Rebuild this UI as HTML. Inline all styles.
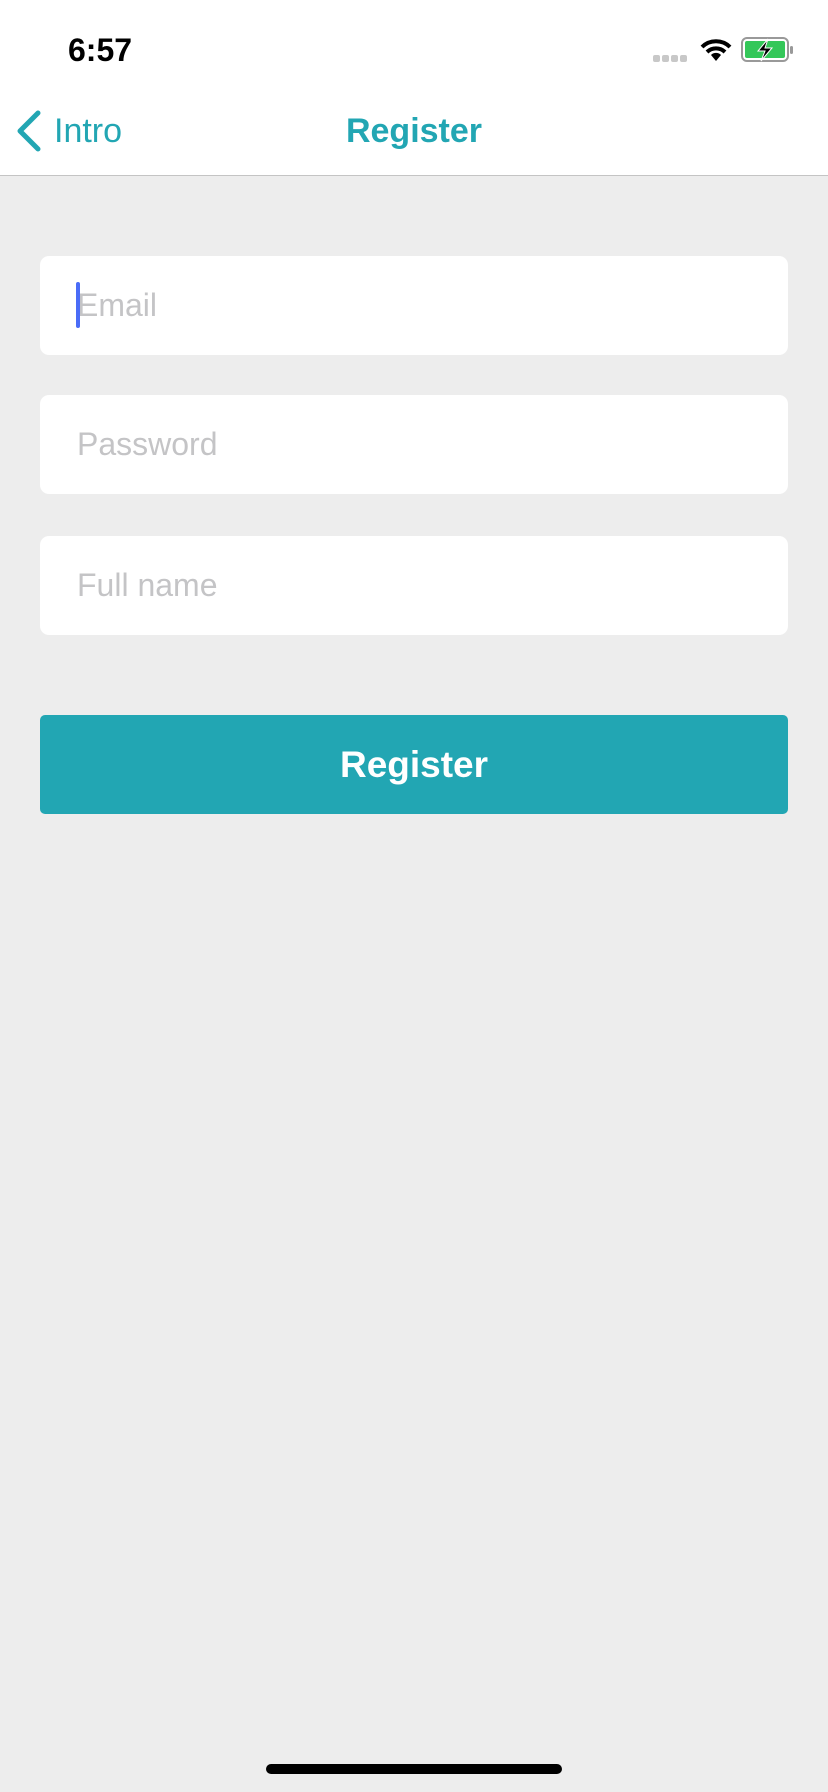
<!DOCTYPE html>
<html><head><meta charset="utf-8"><style>
*{margin:0;padding:0;box-sizing:border-box}
body{width:828px;height:1792px;background:#ededed;font-family:"Liberation Sans",sans-serif;position:relative;overflow:hidden}
.top{position:absolute;left:0;top:0;width:828px;height:176px;background:#fff;border-bottom:1.5px solid #c4c4c4}
.time{position:absolute;left:68px;top:32px;font-size:32px;font-weight:bold;color:#000}
.field{position:absolute;left:40px;width:748px;height:99px;background:#fff;border-radius:9px;font-size:32px;color:#c4c4c6;padding-left:37px;line-height:99px}
.btn{position:absolute;left:40px;top:715px;width:748px;height:99px;background:#22a6b3;border-radius:5px;color:#fff;font-size:37px;font-weight:bold;text-align:center;line-height:99px}
</style></head><body>
<div class="top">
<div class="time">6:57</div>
<div style="position:absolute;left:653px;top:55px;width:36px;height:7px">
<span style="position:absolute;left:0;width:7px;height:7px;border-radius:2px;background:#c8c8c8"></span>
<span style="position:absolute;left:9px;width:7px;height:7px;border-radius:2px;background:#c8c8c8"></span>
<span style="position:absolute;left:18px;width:7px;height:7px;border-radius:2px;background:#c8c8c8"></span>
<span style="position:absolute;left:27px;width:7px;height:7px;border-radius:2px;background:#c8c8c8"></span>
</div>
<svg style="position:absolute;left:700px;top:38px" width="32" height="24" viewBox="0 0 32 24"><path d="M2 9 A20 20 0 0 1 30 9" stroke="#000" stroke-width="4" fill="none"/><path d="M7 14 A13 13 0 0 1 25 14" stroke="#000" stroke-width="4" fill="none"/><path d="M16 23 L11 17 A7 7 0 0 1 21 17 Z" fill="#000"/></svg>
<svg style="position:absolute;left:741px;top:37px" width="56" height="26" viewBox="0 0 56 26"><rect x="1" y="1" width="46" height="23" rx="5" fill="none" stroke="#999" stroke-width="2"/><rect x="4" y="4" width="40" height="17" rx="2" fill="#34c759"/><rect x="49" y="9" width="3" height="8" rx="1.5" fill="#999"/><path d="M27 2 L17 14 L24 14 L20 24 L31 11 L24 11 Z" fill="#000" stroke="#fff" stroke-width="1"/></svg>
<svg style="position:absolute;left:14px;top:110px" width="28" height="42" viewBox="0 0 28 42"><path d="M24 3 L6 21 L24 39" stroke="#22a6b3" stroke-width="5" fill="none" stroke-linecap="round" stroke-linejoin="round"/></svg>
<div style="position:absolute;left:54px;top:112px;font-size:34px;color:#22a6b3">Intro</div>
<div style="position:absolute;left:0;width:828px;top:112px;text-align:center;font-size:34px;color:#22a6b3;font-weight:bold">Register</div>
</div>
<div class="field" style="top:256px"><span style="position:absolute;left:36px;top:26px;width:4px;height:46px;background:#4a6cf7;border-radius:2px"></span>Email</div>
<div class="field" style="top:395px">Password</div>
<div class="field" style="top:536px">Full name</div>
<div class="btn">Register</div>
<div style="position:absolute;left:266px;top:1764px;width:296px;height:10px;background:#000;border-radius:5px"></div>
</body></html>
